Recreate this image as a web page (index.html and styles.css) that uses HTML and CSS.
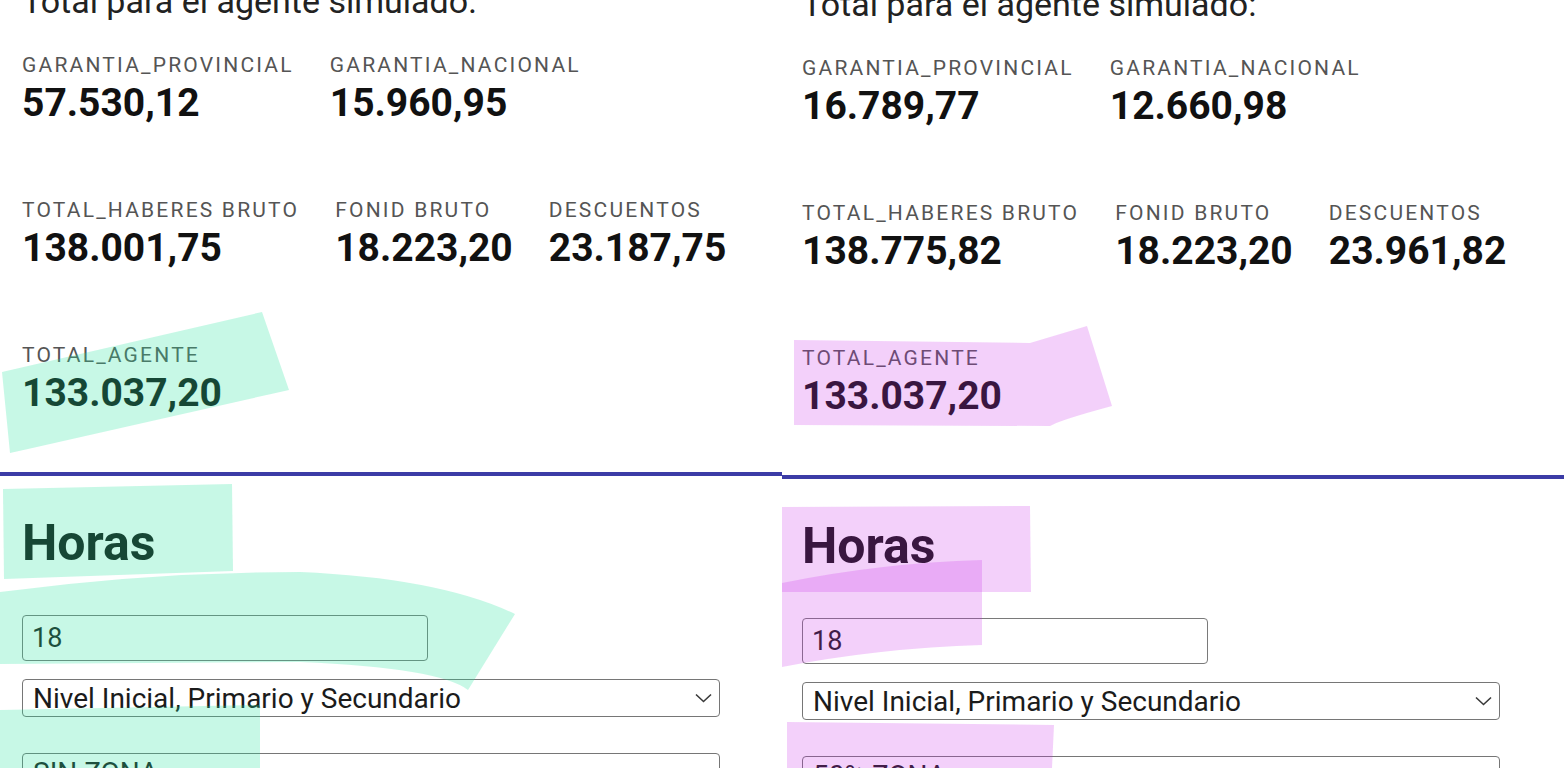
FILE: index.html
```html
<!DOCTYPE html>
<html lang="es">
<head>
<meta charset="utf-8">
<title>Simulador</title>
<link rel="stylesheet" href="styles.css">
</head>
<body>
<div class="screen">
  <section class="panel panel--left">
    <p class="intro">Total para el agente simulado:</p>
    <div class="stats">
      <div class="stat-row">
        <div class="stat"><span class="stat-label">GARANTIA_PROVINCIAL</span><span class="stat-value">57.530,12</span></div>
        <div class="stat"><span class="stat-label">GARANTIA_NACIONAL</span><span class="stat-value">15.960,95</span></div>
      </div>
      <div class="stat-row">
        <div class="stat"><span class="stat-label">TOTAL_HABERES BRUTO</span><span class="stat-value">138.001,75</span></div>
        <div class="stat"><span class="stat-label">FONID BRUTO</span><span class="stat-value">18.223,20</span></div>
        <div class="stat"><span class="stat-label">DESCUENTOS</span><span class="stat-value">23.187,75</span></div>
      </div>
      <div class="stat-row">
        <div class="stat"><span class="stat-label">TOTAL_AGENTE</span><span class="stat-value">133.037,20</span></div>
      </div>
    </div>
    <hr class="divider">
    <div class="form">
      <h2 class="form-title">Horas</h2>
      <input class="text-field" type="text" value="18">
      <div class="select-box">
        <select class="select"><option>Nivel Inicial, Primario y Secundario</option></select>
        <svg class="chevron" width="17" height="10" viewBox="0 0 17 10"><path d="M1 1.5 L8.5 8.5 L16 1.5" fill="none" stroke="#3a3a3a" stroke-width="1.6"/></svg>
      </div>
      <div class="select-box select-box--last">
        <select class="select"><option>SIN ZONA</option></select>
        <svg class="chevron" width="17" height="10" viewBox="0 0 17 10"><path d="M1 1.5 L8.5 8.5 L16 1.5" fill="none" stroke="#3a3a3a" stroke-width="1.6"/></svg>
      </div>
    </div>
  </section>

  <section class="panel panel--right">
    <p class="intro">Total para el agente simulado:</p>
    <div class="stats">
      <div class="stat-row">
        <div class="stat"><span class="stat-label">GARANTIA_PROVINCIAL</span><span class="stat-value">16.789,77</span></div>
        <div class="stat"><span class="stat-label">GARANTIA_NACIONAL</span><span class="stat-value">12.660,98</span></div>
      </div>
      <div class="stat-row">
        <div class="stat"><span class="stat-label">TOTAL_HABERES BRUTO</span><span class="stat-value">138.775,82</span></div>
        <div class="stat"><span class="stat-label">FONID BRUTO</span><span class="stat-value">18.223,20</span></div>
        <div class="stat"><span class="stat-label">DESCUENTOS</span><span class="stat-value">23.961,82</span></div>
      </div>
      <div class="stat-row">
        <div class="stat"><span class="stat-label">TOTAL_AGENTE</span><span class="stat-value">133.037,20</span></div>
      </div>
    </div>
    <hr class="divider">
    <div class="form">
      <h2 class="form-title">Horas</h2>
      <input class="text-field" type="text" value="18">
      <div class="select-box">
        <select class="select"><option>Nivel Inicial, Primario y Secundario</option></select>
        <svg class="chevron" width="17" height="10" viewBox="0 0 17 10"><path d="M1 1.5 L8.5 8.5 L16 1.5" fill="none" stroke="#3a3a3a" stroke-width="1.6"/></svg>
      </div>
      <div class="select-box select-box--last">
        <select class="select"><option>50% ZONA</option></select>
        <svg class="chevron" width="17" height="10" viewBox="0 0 17 10"><path d="M1 1.5 L8.5 8.5 L16 1.5" fill="none" stroke="#3a3a3a" stroke-width="1.6"/></svg>
      </div>
    </div>
  </section>

  <svg class="marks" width="1564" height="768" viewBox="0 0 1564 768">
    <g class="mark-green">
      <path d="M2 372 L262 312 L289 390 Q200 410 10 453 Z"/>
      <path d="M3 489 L232 484 L233 571 L4 579 Z"/>
      <path d="M0 592 Q150 572 300 572 Q440 578 515 614 L468 690 Q440 668 300 662 L0 664 Z"/>
      <path d="M0 710 L260 705 L260 768 L0 768 Z"/>
    </g>
    <g class="mark-pink">
      <path d="M794 340 L1030 343 L1087 326 L1112 406 Q1060 420 1050 426 L794 425 Z"/>
      <path d="M782 507 L1030 506 L1031 592 L782 592 Z"/>
      <path d="M782 583 Q880 563 982 560 L982 645 Q880 648 782 667 Z"/>
      <path d="M787 722 L1054 725 L1052 768 L787 768 Z"/>
    </g>
  </svg>
</div>
</body>
</html>
```

FILE: styles.css
```css
* { box-sizing: border-box; }

html, body {
  margin: 0;
  padding: 0;
  background: #ffffff;
}

body {
  font-family: Roboto, "Liberation Sans", sans-serif;
  color: #1b1b1b;
}

.screen {
  position: relative;
  width: 1564px;
  height: 768px;
  overflow: hidden;
  display: flex;
}

.panel {
  flex: 0 0 782px;
  width: 782px;
  height: 768px;
  overflow: hidden;
  display: flex;
  flex-direction: column;
}

.panel--left { --inset: 22px; }
.panel--right { --inset: 20px; padding-top: 3px; }

.intro {
  margin: -19px 0 0 0;
  padding-left: var(--inset);
  font-size: 34px;
  line-height: 40px;
  color: #222222;
}

.stats {
  padding: 32px 0 0 var(--inset);
  display: flex;
  flex-direction: column;
  gap: 72px;
}

.stat-row {
  display: flex;
  gap: 36px;
}

.stat {
  display: flex;
  flex-direction: column;
  gap: 3px;
}

.stat-label {
  font-size: 21px;
  line-height: 24px;
  letter-spacing: 2.2px;
  color: #555555;
}

.stat-value {
  font-size: 39px;
  line-height: 46px;
  font-weight: 700;
  color: #111111;
}

.divider {
  margin: 56px 0 0 0;
  border: 0;
  height: 4px;
  background: #3c3ca6;
  flex: 0 0 4px;
}

.form {
  padding-left: var(--inset);
  display: flex;
  flex-direction: column;
  align-items: flex-start;
}

.form-title {
  margin: 38px 0 0 0;
  font-size: 50px;
  line-height: 58px;
  font-weight: 700;
  color: #111111;
}

.text-field {
  margin-top: 43px;
  width: 406px;
  height: 46px;
  padding: 0 9px;
  border: 1px solid #7a7a7a;
  border-radius: 4px;
  font-family: Roboto, "Liberation Sans", sans-serif;
  font-size: 27px;
  color: #1b1b1b;
  background: #ffffff;
  outline: none;
}

.select-box {
  margin-top: 18px;
  width: 698px;
  height: 38px;
  border: 1px solid #767676;
  border-radius: 4px;
  display: flex;
  align-items: center;
  padding-right: 7px;
  background: #ffffff;
}

.select-box--last { margin-top: 36px; }

.select {
  flex: 1;
  height: 100%;
  appearance: none;
  -webkit-appearance: none;
  border: 0;
  background: transparent;
  padding: 0 0 0 10px;
  font-family: Roboto, "Liberation Sans", sans-serif;
  font-size: 28px;
  color: #1b1b1b;
  outline: none;
}

.chevron { flex: 0 0 auto; }

.marks {
  position: absolute;
  left: 0;
  top: 0;
  pointer-events: none;
}

.mark-green path { fill: rgba(39, 227, 157, 0.26); }
.mark-pink path { fill: rgba(200, 40, 230, 0.22); }
```
